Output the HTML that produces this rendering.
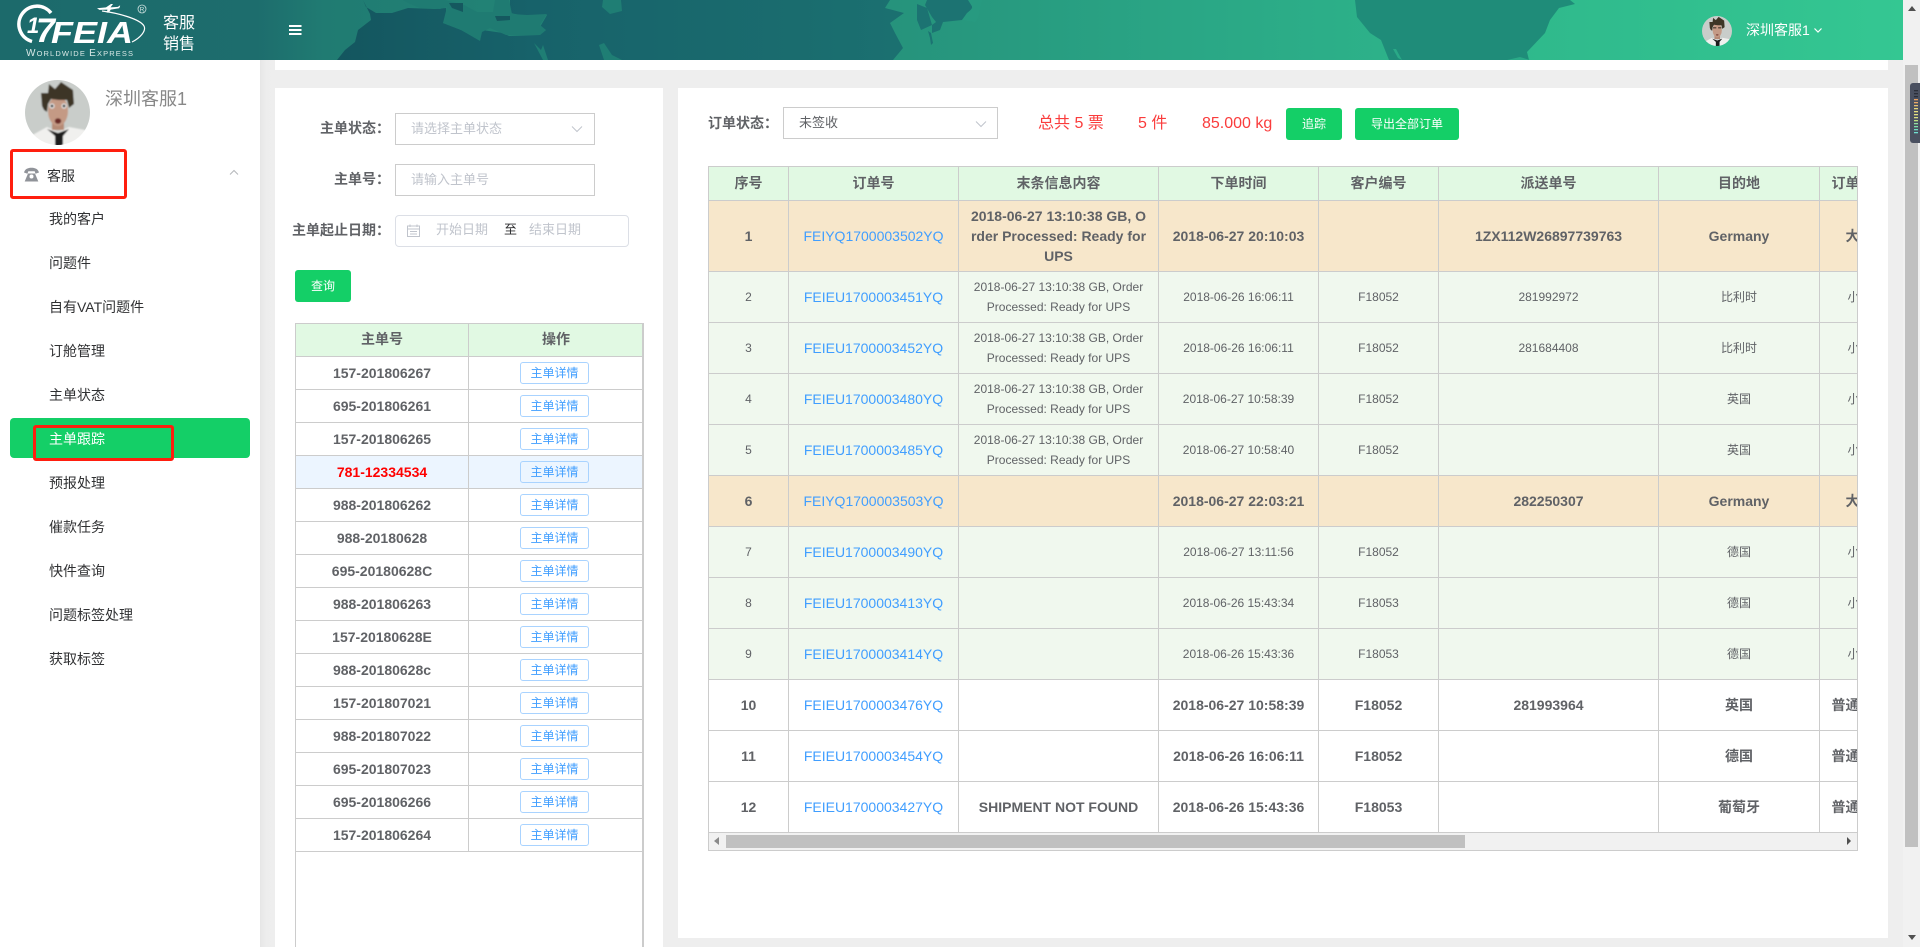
<!DOCTYPE html>
<html lang="zh-CN">
<head>
<meta charset="utf-8">
<title>主单跟踪</title>
<style>
html,body{margin:0;padding:0;width:1920px;height:947px;overflow:hidden;background:#eee;font-family:"Liberation Sans","Noto Sans CJK SC",sans-serif;color:#606266;font-size:14px}
*{box-sizing:border-box}
#root{position:absolute;left:0;top:0;width:1920px;height:947px;overflow:hidden;background:#eee}
.a{position:absolute}
.header{left:0;top:0;width:1903px;height:60px;overflow:hidden}
.sidebar{left:0;top:60px;width:260px;height:887px;background:#fff}
.shadow{left:260px;top:60px;width:15px;height:887px;background:linear-gradient(90deg,#e6e6e6,#ededed 40%,#eee)}
.item{position:absolute;left:49px;height:20px;line-height:20px;color:#303133;font-size:14px;white-space:nowrap}
.active-bg{left:10px;top:418px;width:240px;height:40px;background:#14cf67;border-radius:4px}
.redbox{border:3px solid #ff1e0e;border-radius:3px}
.card{background:#fff}
.lbl{height:20px;line-height:20px;font-weight:bold;color:#606266;font-size:14px;text-align:right;white-space:nowrap}
.lbl span{font-family:"Noto Sans CJK TC",sans-serif}
.box{background:#fff;border:1px solid #ccc}
.ph{color:#c0c4cc;font-size:13px;line-height:20px;height:20px;white-space:nowrap}
.btn{background:#14cf67;color:#fff;font-size:12px;border-radius:3px;text-align:center;line-height:32px;height:32px}
.red{color:#fa3c3c;font-size:16px;line-height:20px;height:20px;white-space:nowrap}
table{border-collapse:separate;border-spacing:0;table-layout:fixed}
th,td{padding:5px;text-align:center;vertical-align:middle;line-height:20px;border-right:1px solid #ccc;border-bottom:1px solid #ccc;overflow:hidden;white-space:nowrap}
th{background:#e1f9e3;font-size:14px;font-weight:bold;color:#606266;height:34px;padding:4px 5px 6px}
.lt{width:347px}
.lt th{height:33px}
.lt td{height:33px;padding:0;font-size:14px;font-weight:bold;background:#fff}
.lt tr.sel td{background:#ecf5ff}
.lt tr.sel td:first-child{color:#f00}
.lt td:last-child,.lt th:last-child{border-right:none}
.dbtn{display:block;margin:0 0 0 51px;width:69px;height:22px;line-height:20px;border:1px solid #a9d3ff;border-radius:3px;color:#409eff;font-size:12px;font-weight:normal;background:#fff}
.lt tr.sel .dbtn{background:#ecf5ff}
.rt{width:1191px}
.rt td{height:51px;font-size:12px;color:#606266}
.rt td a{color:#409eff;font-size:14px;font-weight:normal;text-decoration:none}
.rt tr.o td{background:#f7e7cb;font-size:14px;font-weight:bold}
.rt tr.g td{background:#f0f8ee}
.rt tr.w td{background:#fff;font-size:14px;font-weight:bold}
.rt tr.h td{height:71px}
</style>
</head>
<body>
<div id="root">

<div class="a header">
<svg width="1903" height="60" viewBox="0 0 1903 60" style="display:block">
<defs>
<linearGradient id="hg" x1="0" y1="0" x2="1903" y2="0" gradientUnits="userSpaceOnUse">
<stop offset="0" stop-color="#1c6a6b"/>
<stop offset=".135" stop-color="#1d6d6d"/>
<stop offset=".17" stop-color="#207b72"/>
<stop offset=".47" stop-color="#26937c"/>
<stop offset=".62" stop-color="#2aa685"/>
<stop offset=".8" stop-color="#2fb98c"/>
<stop offset="1" stop-color="#34c792"/>
</linearGradient>
<linearGradient id="dk" x1="340" y1="0" x2="900" y2="0" gradientUnits="userSpaceOnUse">
<stop offset="0" stop-color="#14565f"/>
<stop offset=".35" stop-color="#17626a"/>
<stop offset="1" stop-color="#1b7070"/>
</linearGradient>
</defs>
<rect width="1903" height="60" fill="url(#hg)"/>
<polygon fill="url(#dk)" points="363,0 366,7 376,13 392,13 408,8 435,9 446,8 446,18 443,23 461,30 480,40 482,30 503,33 509,36 540,35 546,30 540,27 547,15 530,17 510,13 510,0 890,0 885,8 904,13 890,23 895,33 903,48 893,60 337,60 345,50 355,42 358,30 371,20 370,14"/>
<polygon fill="#1f7b72" points="403,0 408,3 420,8 440,9 447,7 443,23 461,30 480,41 482,32 490,28 506,35 540,35 546,30 540,25 547,14 527,15 512,14 509,0 495,0 493,12 477,12 464,5 445,0"/>
<polygon fill="#15585f" points="449,3 463,3 463,12 452,8"/>
<polygon fill="#15585f" points="495,16 510,16 510,20 497,21"/>
<polygon fill="#1f7e74" points="603,0 621,0 622,11 610,14 602,7"/>
<polygon fill="#1f7e74" points="599,45 604,43 612,55 622,60 604,60"/>
<polygon fill="#1f7e74" points="534,43 541,50 543,45 548,60 543,60"/>
<polygon fill="#1c7372" points="917,4 927,8 932,25 921,30 917,20"/>
<polygon fill="#1c7372" points="932,33 940,30 943,22 962,20 967,15 972,8 972,0 927,0 925,5 932,17 936,22 932,25"/>
<polygon fill="#1c7372" points="928,31 931,33 933,43 931,45 930,38"/>
<polygon fill="#279a80" points="950,0 972,0 982,0 978,18 975,22 962,20 967,13 973,8 968,0"/>
<polygon fill="#1f8c79" points="1355,0 1357,17 1370,33 1381,40 1389,60 1529,60 1527,52 1545,33 1550,20 1559,8 1575,4 1570,0"/>
<polygon fill="#2aa987" points="1393,49 1398,58 1402,60 1396,49"/>
<polygon fill="#2aa987" points="1507,60 1520,57 1530,60"/>
<path d="M51 13A18 18 0 1 0 32 41.500" fill="none" stroke="#fff" stroke-width="3.500"/>
<g fill="#fff" font-family="Liberation Sans" font-weight="bold" font-style="italic">
<text x="27" y="33" font-size="22">1</text>
<text x="36" y="42" font-size="34">7</text>
<text x="51" y="43" font-size="31" textLength="82" lengthAdjust="spacingAndGlyphs">FEIA</text>
</g>
<text x="26" y="56" font-family="Liberation Sans" fill="#d8e8e6" font-size="7.500" textLength="107" lengthAdjust="spacing"><tspan font-size="10">W</tspan>ORLDWIDE <tspan font-size="10">E</tspan>XPRESS</text>
<path fill="#fff" d="M97 8.200l9-.8 5-3.400h2l-2.500 3.400 7.500-.5 1.500-1.300.7.200-1 2.400-8.500 1.400-2 3h-2l.7-3-8 .3z"/>
<path d="M102 11c16 2 38 8 42 15 2.500 5-4 12-12 16" fill="none" stroke="#fff" stroke-width="1.200"/>
<circle cx="142" cy="9" r="4" fill="none" stroke="#cfe2e0" stroke-width=".8"/>
<text x="142" y="11.500" text-anchor="middle" font-family="Liberation Sans" font-size="6.500" fill="#cfe2e0">R</text>
<text x="163" y="28" font-size="16" fill="#fff">客服</text>
<text x="163" y="49" font-size="16" fill="#fff">销售</text>
<rect x="289" y="25" width="12.500" height="2" fill="#fff"/>
<rect x="289" y="29" width="12.500" height="2" fill="#fff"/>
<rect x="289" y="33" width="12.500" height="2" fill="#fff"/>
<text x="1746" y="35" font-size="14" fill="#fff">深圳客服1</text>
<polyline points="1814.500,28.500 1818,32 1821.500,28.500" fill="none" stroke="#fff" stroke-width="1.200"/>
</svg>
</div>

<svg class="a" style="left:1702px;top:16px" width="30" height="30" viewBox="0 0 65 65">
<defs>
<clipPath id="cc"><circle cx="32.500" cy="32.500" r="32.500"/></clipPath>
<filter id="sf"><feGaussianBlur stdDeviation=".7"/></filter>
</defs>
<g clip-path="url(#cc)"><g filter="url(#sf)">
<rect x="-2" y="-2" width="70" height="70" fill="#c9cdca"/>
<polygon points="2,58 22,47 33,52 44,47 60,50 65,67 0,67" fill="#f0f0ee"/>
<rect x="27" y="38" width="12" height="12" fill="#b58a75"/>
<ellipse cx="33" cy="31" rx="10" ry="15" fill="#c49a85"/>
<polygon points="17,26 16,13 23,13 24,4 30,9 36,2 42,6 48,10 49,24 44,28 42,20 34,20 26,19 23,24 22,32 19,30" fill="#3e3428"/>
<rect x="24" y="24" width="7" height="3" fill="#5a463a"/><rect x="35" y="24" width="7" height="3" fill="#5a463a"/>
<ellipse cx="33" cy="41" rx="3" ry="1.500" fill="#7b4238"/>
<polygon points="22,49 33,53 44,49 38,56 38,67 30,67 30,56" fill="#1e1e1e"/>
</g></g>
</svg>

<div class="a" style="left:275px;top:60px;width:1613px;height:10px;background:#fff"></div>

<div class="a sidebar"></div>
<div class="a shadow"></div>

<svg class="a" style="left:25px;top:80px" width="65" height="65" viewBox="0 0 65 65">
<g clip-path="url(#cc)"><g filter="url(#sf)">
<rect x="-2" y="-2" width="70" height="70" fill="#c9cdca"/>
<polygon points="2,58 22,47 33,52 44,47 60,50 65,67 0,67" fill="#f0f0ee"/>
<rect x="27" y="38" width="12" height="12" fill="#b58a75"/>
<ellipse cx="33" cy="31" rx="10" ry="15" fill="#c49a85"/>
<polygon points="17,26 16,13 23,13 24,4 30,9 36,2 42,6 48,10 49,24 44,28 42,20 34,20 26,19 23,24 22,32 19,30" fill="#3e3428"/>
<circle cx="27" cy="26" r="2.600" fill="#e8e8e8"/><circle cx="27" cy="26" r="1.400" fill="#222"/>
<circle cx="39" cy="26" r="2.600" fill="#e8e8e8"/><circle cx="39" cy="26" r="1.400" fill="#222"/>
<ellipse cx="33" cy="41" rx="3.200" ry="2.800" fill="#6b2b28"/>
<polygon points="22,49 33,53 44,49 38,56 38,67 30,67 30,56" fill="#1e1e1e"/>
</g></g>
</svg>
<div class="a" style="left:105px;top:86px;font-size:18px;line-height:26px;color:#888;white-space:nowrap">深圳客服1</div>

<svg class="a" style="left:24px;top:167px" width="15" height="15" viewBox="0 0 15 15">
<path d="M0 5.500C1 2 4 .8 7.500.8S14 2 15 5.500l-3.500 1.300-.8-2.500H4.300l-.8 2.500z" fill="#909399"/>
<path d="M4 6.500h7l3.300 8H.7z" fill="#909399"/>
<circle cx="7.500" cy="9.500" r="2" fill="#fff"/>
</svg>
<div class="item" style="left:47px;top:166px">客服</div>
<svg class="a" style="left:229px;top:169px" width="10" height="7" viewBox="0 0 10 7"><polyline points="1,5.500 5,1.500 9,5.500" fill="none" stroke="#b4b6ba" stroke-width="1"/></svg>
<div class="a redbox" style="left:10px;top:149px;width:117px;height:50px"></div>

<div class="item" style="top:209px">我的客户</div>
<div class="item" style="top:253px">问题件</div>
<div class="item" style="top:297px">自有VAT问题件</div>
<div class="item" style="top:341px">订舱管理</div>
<div class="item" style="top:385px">主单状态</div>
<div class="a active-bg"></div>
<div class="item" style="top:429px;color:#fff">主单跟踪</div>
<div class="a redbox" style="left:33px;top:425px;width:141px;height:36px"></div>
<div class="item" style="top:473px">预报处理</div>
<div class="item" style="top:517px">催款任务</div>
<div class="item" style="top:561px">快件查询</div>
<div class="item" style="top:605px">问题标签处理</div>
<div class="item" style="top:649px">获取标签</div>

<div class="a card" style="left:275px;top:88px;width:388px;height:859px"></div>
<div class="a lbl" style="left:280px;top:118px;width:110px">主单状态<span>：</span></div>
<div class="a box" style="left:395px;top:113px;width:200px;height:32px"></div>
<div class="a ph" style="left:411px;top:119px">请选择主单状态</div>
<svg class="a" style="left:571px;top:125px" width="12" height="8" viewBox="0 0 12 8"><polyline points="1,1.500 6,6.500 11,1.500" fill="none" stroke="#c0c4cc" stroke-width="1"/></svg>
<div class="a lbl" style="left:280px;top:169px;width:110px">主单号<span>：</span></div>
<div class="a box" style="left:395px;top:164px;width:200px;height:32px"></div>
<div class="a ph" style="left:411px;top:170px">请输入主单号</div>
<div class="a lbl" style="left:280px;top:220px;width:110px">主单起止日期<span>：</span></div>
<div class="a" style="left:395px;top:215px;width:234px;height:32px;border:1px solid #dcdfe6;border-radius:4px;background:#fff"></div>
<svg class="a" style="left:407px;top:224px" width="13" height="13" viewBox="0 0 13 13"><path d="M.5 2h12v10.500H.5zM.5 5h12M3 .5V3M10 .5V3M3 7.500h7M3 10h7" fill="none" stroke="#c0c4cc" stroke-width="1"/></svg>
<div class="a ph" style="left:436px;top:220px">开始日期</div>
<div class="a ph" style="left:504px;top:220px;color:#303133">至</div>
<div class="a ph" style="left:529px;top:220px">结束日期</div>
<div class="a btn" style="left:295px;top:270px;width:56px">查询</div>

<div class="a" style="left:295px;top:323px;width:349px;height:624px;border:1px solid #ccc;border-right:2px solid #ccc;border-bottom:none;background:#fff;overflow:hidden">
<table class="lt">
<colgroup><col style="width:173px"><col style="width:174px"></colgroup>
<tr><th>主单号</th><th>操作</th></tr>
<tr><td>157-201806267</td><td><span class="dbtn">主单详情</span></td></tr>
<tr><td>695-201806261</td><td><span class="dbtn">主单详情</span></td></tr>
<tr><td>157-201806265</td><td><span class="dbtn">主单详情</span></td></tr>
<tr class="sel"><td>781-12334534</td><td><span class="dbtn">主单详情</span></td></tr>
<tr><td>988-201806262</td><td><span class="dbtn">主单详情</span></td></tr>
<tr><td>988-20180628</td><td><span class="dbtn">主单详情</span></td></tr>
<tr><td>695-20180628C</td><td><span class="dbtn">主单详情</span></td></tr>
<tr><td>988-201806263</td><td><span class="dbtn">主单详情</span></td></tr>
<tr><td>157-20180628E</td><td><span class="dbtn">主单详情</span></td></tr>
<tr><td>988-20180628c</td><td><span class="dbtn">主单详情</span></td></tr>
<tr><td>157-201807021</td><td><span class="dbtn">主单详情</span></td></tr>
<tr><td>988-201807022</td><td><span class="dbtn">主单详情</span></td></tr>
<tr><td>695-201807023</td><td><span class="dbtn">主单详情</span></td></tr>
<tr><td>695-201806266</td><td><span class="dbtn">主单详情</span></td></tr>
<tr><td>157-201806264</td><td><span class="dbtn">主单详情</span></td></tr>
</table>
</div>

<div class="a card" style="left:678px;top:88px;width:1210px;height:850px"></div>
<div class="a lbl" style="left:708px;top:113px;width:75px;text-align:left">订单状态<span>：</span></div>
<div class="a box" style="left:783px;top:107px;width:215px;height:32px"></div>
<div class="a" style="left:799px;top:113px;font-size:13px;line-height:20px;color:#606266">未签收</div>
<svg class="a" style="left:975px;top:120px" width="12" height="8" viewBox="0 0 12 8"><polyline points="1,1.500 6,6.500 11,1.500" fill="none" stroke="#c0c4cc" stroke-width="1"/></svg>
<div class="a red" style="left:1038px;top:114px">总共 5 票</div>
<div class="a red" style="left:1138px;top:114px">5 件</div>
<div class="a red" style="left:1202px;top:114px">85.000 kg</div>
<div class="a btn" style="left:1286px;top:108px;width:56px">追踪</div>
<div class="a btn" style="left:1355px;top:108px;width:104px">导出全部订单</div>

<div class="a" style="left:708px;top:166px;width:1150px;height:685px;border:1px solid #ccc;background:#f1f1f1;overflow:hidden">
<table class="rt">
<colgroup><col style="width:80px"><col style="width:170px"><col style="width:200px"><col style="width:160px"><col style="width:120px"><col style="width:220px"><col style="width:161px"><col style="width:80px"></colgroup>
<tr><th>序号</th><th>订单号</th><th>末条信息内容</th><th>下单时间</th><th>客户编号</th><th>派送单号</th><th>目的地</th><th>订单类型</th></tr>
<tr class="o h"><td>1</td><td><a>FEIYQ1700003502YQ</a></td><td>2018-06-27 13:10:38 GB, O<br>rder Processed: Ready for<br>UPS</td><td>2018-06-27 20:10:03</td><td></td><td>1ZX112W26897739763</td><td>Germany</td><td>大货</td></tr>
<tr class="g"><td>2</td><td><a>FEIEU1700003451YQ</a></td><td>2018-06-27 13:10:38 GB, Order<br>Processed: Ready for UPS</td><td>2018-06-26 16:06:11</td><td>F18052</td><td>281992972</td><td>比利时</td><td>小货</td></tr>
<tr class="g"><td>3</td><td><a>FEIEU1700003452YQ</a></td><td>2018-06-27 13:10:38 GB, Order<br>Processed: Ready for UPS</td><td>2018-06-26 16:06:11</td><td>F18052</td><td>281684408</td><td>比利时</td><td>小货</td></tr>
<tr class="g"><td>4</td><td><a>FEIEU1700003480YQ</a></td><td>2018-06-27 13:10:38 GB, Order<br>Processed: Ready for UPS</td><td>2018-06-27 10:58:39</td><td>F18052</td><td></td><td>英国</td><td>小货</td></tr>
<tr class="g"><td>5</td><td><a>FEIEU1700003485YQ</a></td><td>2018-06-27 13:10:38 GB, Order<br>Processed: Ready for UPS</td><td>2018-06-27 10:58:40</td><td>F18052</td><td></td><td>英国</td><td>小货</td></tr>
<tr class="o"><td>6</td><td><a>FEIYQ1700003503YQ</a></td><td></td><td>2018-06-27 22:03:21</td><td></td><td>282250307</td><td>Germany</td><td>大货</td></tr>
<tr class="g"><td>7</td><td><a>FEIEU1700003490YQ</a></td><td></td><td>2018-06-27 13:11:56</td><td>F18052</td><td></td><td>德国</td><td>小货</td></tr>
<tr class="g"><td>8</td><td><a>FEIEU1700003413YQ</a></td><td></td><td>2018-06-26 15:43:34</td><td>F18053</td><td></td><td>德国</td><td>小货</td></tr>
<tr class="g"><td>9</td><td><a>FEIEU1700003414YQ</a></td><td></td><td>2018-06-26 15:43:36</td><td>F18053</td><td></td><td>德国</td><td>小货</td></tr>
<tr class="w"><td>10</td><td><a>FEIEU1700003476YQ</a></td><td></td><td>2018-06-27 10:58:39</td><td>F18052</td><td>281993964</td><td>英国</td><td>普通小包</td></tr>
<tr class="w"><td>11</td><td><a>FEIEU1700003454YQ</a></td><td></td><td>2018-06-26 16:06:11</td><td>F18052</td><td></td><td>德国</td><td>普通小包</td></tr>
<tr class="w"><td>12</td><td><a>FEIEU1700003427YQ</a></td><td>SHIPMENT NOT FOUND</td><td>2018-06-26 15:43:36</td><td>F18053</td><td></td><td>葡萄牙</td><td>普通小包</td></tr>
</table>
</div>
<div class="a" style="left:709px;top:833px;width:1148px;height:17px;background:#f1f1f1"></div>
<div class="a" style="left:726px;top:835px;width:739px;height:13px;background:#c0c0c0"></div>
<svg class="a" style="left:714px;top:837px" width="6" height="9" viewBox="0 0 6 9"><polygon points="5,0 5,8 0,4" fill="#8a8a8a"/></svg>
<svg class="a" style="left:1846px;top:837px" width="6" height="9" viewBox="0 0 6 9"><polygon points="1,0 1,8 5,4" fill="#505050"/></svg>

<div class="a" style="left:1903px;top:0;width:17px;height:947px;background:#f1f1f1"></div>
<div class="a" style="left:1905px;top:65px;width:13px;height:782px;background:#c0c0c0"></div>
<svg class="a" style="left:1907px;top:5px" width="10" height="8" viewBox="0 0 10 8"><polygon points="5,1 9,6 1,6" fill="#505050"/></svg>
<svg class="a" style="left:1907px;top:934px" width="10" height="8" viewBox="0 0 10 8"><polygon points="1,1 9,1 5,6" fill="#505050"/></svg>
<svg class="a" style="left:1910px;top:83px" width="10" height="60" viewBox="0 0 10 60">
<path d="M10 0H3a3 3 0 0 0-3 3v54a3 3 0 0 0 3 3h7z" fill="#4a5060"/>
<g>
<rect x="4" y="7" width="4" height="1.300" fill="#2a2e38"/><rect x="4" y="10" width="4" height="1.300" fill="#2a2e38"/><rect x="4" y="13" width="4" height="1.300" fill="#2a2e38"/>
<rect x="4" y="16" width="4" height="1.300" fill="#e8a060"/><rect x="4" y="19" width="4" height="1.300" fill="#e8a868"/><rect x="4" y="22" width="4" height="1.300" fill="#e8c070"/>
<rect x="4" y="25" width="4" height="1.300" fill="#e8d878"/><rect x="4" y="28" width="4" height="1.300" fill="#e8e080"/><rect x="4" y="31" width="4" height="1.300" fill="#e0e080"/><rect x="4" y="34" width="4" height="1.300" fill="#d8e080"/>
<rect x="4" y="37" width="4" height="1.300" fill="#c0e080"/><rect x="4" y="40" width="4" height="1.300" fill="#90e0a0"/><rect x="4" y="43" width="4" height="1.300" fill="#80e0a8"/><rect x="4" y="46" width="4" height="1.300" fill="#70e0c0"/><rect x="4" y="49" width="4" height="1.300" fill="#70e0d0"/>
</g>
</svg>
</div>
</body>
</html>
